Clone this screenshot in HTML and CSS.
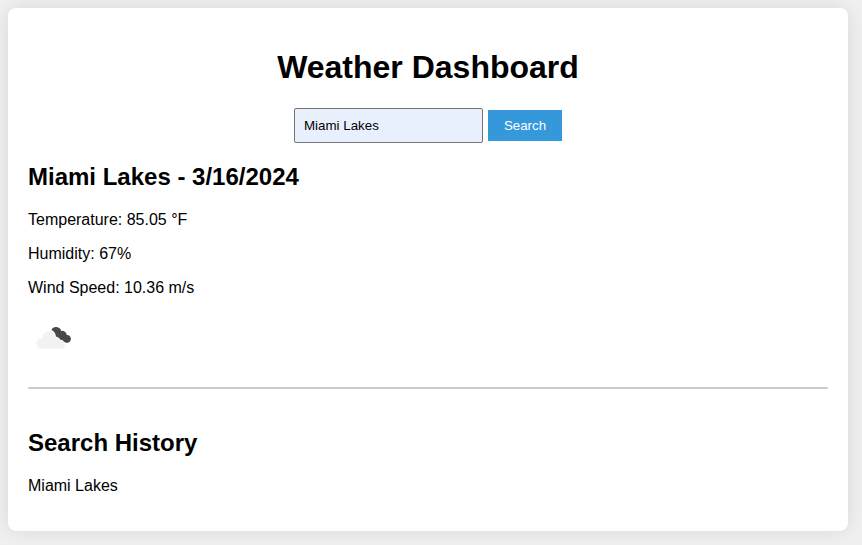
FILE: index.html
```html
<!DOCTYPE html>
<html lang="en">
<head>
<meta charset="utf-8">
<title>Weather Dashboard</title>
<link rel="stylesheet" href="styles.css">
</head>
<body>
<main class="container">
  <h1>Weather Dashboard</h1>
  <form class="search">
    <input class="city" type="text" value="Miami Lakes" aria-label="City">
    <button class="submit" type="button">Search</button>
  </form>
  <section class="current">
    <h2>Miami Lakes - 3/16/2024</h2>
    <p>Temperature: 85.05 °F</p>
    <p>Humidity: 67%</p>
    <p>Wind Speed: 10.36 m/s</p>
    <svg class="icon" viewBox="0 1 50 50" aria-hidden="true">
      <path fill="#484848" d="M23.300 18A5.300 5.300 0 0 1 33.200 19 4.400 4.400 0 0 1 38.800 23 3.900 3.900 0 1 1 37 30.200Q35.500 29.500 34.800 28.200 32 28.500 30.700 25.800L28 24.500Q27 19 23.300 18Z"/>
      <path fill="#f2f2f2" d="M13.500 36.700a5.200 5.200 0 0 1 0-10.400h1A6.600 6.600 0 0 1 26.800 22.500Q27.600 24 27.500 25.200a4.700 4.700 0 0 1 5 3.500 4.200 4.200 0 0 1 2 8z"/>
    </svg>
  </section>
  <section class="history">
    <h2>Search History</h2>
    <p>Miami Lakes</p>
  </section>
</main>
</body>
</html>
```
FILE: styles.css
```css
body {
  margin: 0;
  padding: 8px 14px 14px 8px;
  background: #f0f0f0;
  font: 16px "Liberation Sans", Arial, sans-serif;
  color: #000;
}
.container {
  box-sizing: border-box;
  height: 523px;
  padding: 20px;
  background: #fff;
  border-radius: 8px;
  box-shadow: 0 0 20px rgba(0, 0, 0, .1);
}
h1 {
  margin: 20px 0 22px;
  font-size: 32px;
  line-height: 38px;
  text-align: center;
}
.search {
  display: flex;
  justify-content: center;
  align-items: center;
  gap: 5px;
  margin: 0;
}
.city {
  box-sizing: border-box;
  width: 189px;
  height: 35px;
  padding: 8px 9px;
  border: 1px solid #767676;
  border-radius: 2px;
  background: #e8f0fe;
  font: 13.333px "Liberation Sans", Arial, sans-serif;
}
.submit {
  width: 74px;
  height: 31px;
  padding: 0;
  border: 0;
  background: #3498db;
  color: #fff;
  font: 13.333px "Liberation Sans", Arial, sans-serif;
}
h2 {
  margin: 20px 0 21px;
  font-size: 24px;
  line-height: 27px;
}
p {
  margin: 16px 0;
  line-height: 18px;
}
.icon {
  display: block;
  width: 50px;
  height: 50px;
}
.current {
  height: 224px;
  border-bottom: 2px solid #ccc;
}
.history {
  padding-top: 20px;
}
```
